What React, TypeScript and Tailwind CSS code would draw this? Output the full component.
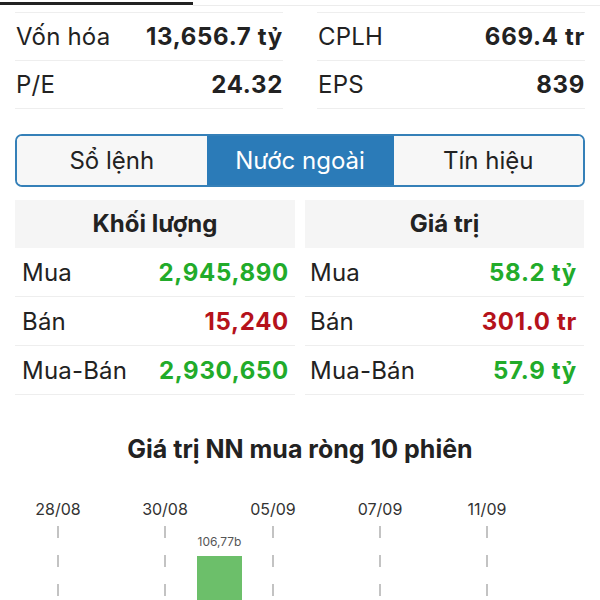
import React from 'react';

const font = { fontFamily: 'Inter, "Noto Sans", sans-serif' };

const stats = [
  [
    { label: 'Vốn hóa', value: '13,656.7 tỷ' },
    { label: 'P/E', value: '24.32' },
  ],
  [
    { label: 'CPLH', value: '669.4 tr' },
    { label: 'EPS', value: '839' },
  ],
];

const GREEN = 'text-[#22ab2a]';
const RED = 'text-[#b5121b]';

const tables = [
  {
    title: 'Khối lượng',
    rows: [
      { label: 'Mua', value: '2,945,890', color: GREEN },
      { label: 'Bán', value: '15,240', color: RED },
      { label: 'Mua-Bán', value: '2,930,650', color: GREEN },
    ],
  },
  {
    title: 'Giá trị',
    rows: [
      { label: 'Mua', value: '58.2 tỷ', color: GREEN },
      { label: 'Bán', value: '301.0 tr', color: RED },
      { label: 'Mua-Bán', value: '57.9 tỷ', color: GREEN },
    ],
  },
];

const dates = [
  { x: 58, label: '28/08' },
  { x: 165, label: '30/08' },
  { x: 273, label: '05/09' },
  { x: 380, label: '07/09' },
  { x: 487, label: '11/09' },
];

const Chart = () => (
  <svg width="600" height="120" viewBox="0 0 600 120" className="block">
    {dates.map((d) => (
      <g key={d.label}>
        <text x={d.x} y={24} textAnchor="middle" fontSize="16" fill="#333" style={font}>
          {d.label}
        </text>
        <line x1={d.x} y1={35} x2={d.x} y2={120} stroke="#b0b0b0" strokeWidth="1.5" strokeDasharray="12 17" />
      </g>
    ))}
    <text x={219.5} y={55} textAnchor="middle" fontSize="12" fill="#555" style={font}>
      106,77b
    </text>
    <rect x={197} y={65} width={45} height={60} fill="#6cbf6a" />
  </svg>
);

export default function App() {
  return (
    <div className="w-[600px] h-[600px] overflow-hidden bg-white text-[#222]" style={font}>
      <div className="flex h-[6px] items-start pt-[2px]">
        <div className="w-[193px] h-[3px] bg-[#222]" />
        <div className="flex-1 h-[4px] border-b border-[#ececec]" />
      </div>

      <div className="flex gap-[34px] px-[15px] mt-[6px]">
        {stats.map((col, i) => (
          <div key={i} className="flex-1 border-t border-[#eeeeee]">
            {col.map((s) => (
              <div key={s.label} className="flex h-[48px] items-center justify-between border-b border-[#eeeeee] pl-[1px] pt-[1px]">
                <span className="text-[24px] tracking-[0.2px]">{s.label}</span>
                <span className="text-[24px] font-bold tracking-[0.7px]">{s.value}</span>
              </div>
            ))}
          </div>
        ))}
      </div>

      <div className="mx-[15px] mt-[25px] flex h-[53px] overflow-hidden rounded-[7px] border-2 border-[#3580b8] text-[24px]">
        <div className="flex flex-1 items-center justify-center bg-[#f7f7f7]">Sổ lệnh</div>
        <div className="flex w-[187px] items-center justify-center bg-[#2b7bb8] text-white">Nước ngoài</div>
        <div className="flex flex-1 items-center justify-center bg-[#f7f7f7]">Tín hiệu</div>
      </div>

      <div className="flex gap-[10px] px-[15px] mt-[13px]">
        {tables.map((t, i) => (
          <div key={t.title} className={i === 0 ? 'w-[280px]' : 'flex-1 pr-[1px]'}>
            <div className="flex h-[48px] items-center justify-center bg-[#f5f5f5] text-[24px] font-bold">
              {t.title}
            </div>
            {t.rows.map((r) => (
              <div
                key={r.label}
                className={`flex h-[49px] items-center justify-between border-b border-[#eeeeee] pt-[2px] ${i === 0 ? 'pl-[7px] pr-[6px]' : 'pl-[5px] pr-[7px]'}`}
              >
                <span className="text-[24px] tracking-[0.2px]">{r.label}</span>
                <span className={`text-[24px] font-bold tracking-[0.7px] ${r.color}`}>{r.value}</span>
              </div>
            ))}
          </div>
        ))}
      </div>

      <div className="mt-[39px] text-center text-[25px] font-bold leading-[30px]">Giá trị NN mua ròng 10 phiên</div>

      <div className="mt-[27px]">
        <Chart />
      </div>
    </div>
  );
}
